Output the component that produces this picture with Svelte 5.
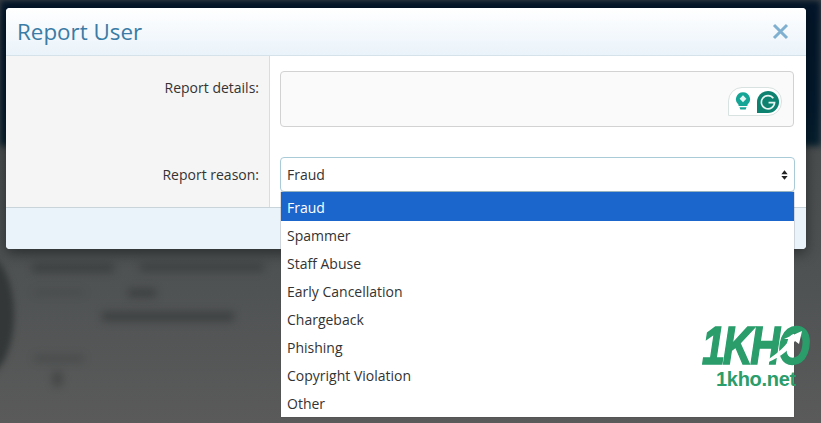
<script lang="ts">
  const reasons = ['Fraud', 'Spammer', 'Staff Abuse', 'Early Cancellation', 'Chargeback', 'Phishing', 'Copyright Violation', 'Other']
  let selected = $state('Fraud')
</script>

<div class="page">
  <div class="backdrop">
    <div class="top-band"></div>
    <div class="avatar"></div>
    <div class="blur b1"></div>
    <div class="blur b2"></div>
    <div class="blur b3"></div>
    <div class="blur b4"></div>
    <div class="blur b5"></div>
    <div class="blur b6"></div>
    <div class="blur b7"></div>
  </div>

  <div class="modal">
    <header class="modal-head">
      <h2>Report User</h2>
      <button type="button" class="close" aria-label="Close">
        <svg width="17" height="17" viewBox="0 0 17 17">
          <path d="M2 2 L15 15 M15 2 L2 15" stroke="#7fb0d0" stroke-width="3" fill="none" />
        </svg>
      </button>
    </header>

    <div class="modal-body">
      <div class="row first">
        <div class="label">Report details:</div>
        <div class="field">
          <div class="textarea">
            <div class="grammarly">
              <svg width="16" height="21" viewBox="0 0 18 23">
                <path d="M9 1 a8 8 0 0 1 5 14.2 V16.5 H4 V15.2 A8 8 0 0 1 9 1 Z" fill="#15a596" />
                <path d="M5 18 H13 L12 20.5 H6 Z" fill="#15a596" />
                <path d="M9 4.6 L12.8 8.5 L9 12.4 L5.2 8.5 Z" fill="#e3f6f3" />
              </svg>
              <svg width="22" height="22" viewBox="0 0 24 24">
                <path d="M12 0 a12 12 0 1 1 0 24 H0 V12 A12 12 0 0 1 12 0 Z" fill="#0d8270" />
                <path d="M17.8 8 A7.2 7.2 0 1 0 19.2 12.6 H12.6" fill="none" stroke="#e6f5f2" stroke-width="1.8" />
              </svg>
            </div>
          </div>
        </div>
      </div>
      <div class="row second">
        <div class="label">Report reason:</div>
        <div class="field">
          <div class="select">
            <span>{selected}</span>
            <svg width="7" height="12" viewBox="0 0 8 12">
              <path d="M4 0.5 L7.6 5 H0.4 Z M0.4 7 H7.6 L4 11.5 Z" fill="#222" />
            </svg>
            <ul class="options">
              {#each reasons as reason}
                <li class:active={reason === selected}>{reason}</li>
              {/each}
            </ul>
          </div>
        </div>
      </div>
    </div>

    <footer class="modal-foot"></footer>
  </div>

  <div class="logo">
    <div class="logo-mark">1KHO</div>
    <svg class="swoosh" width="50" height="38" viewBox="0 0 50 38">
      <path d="M2 37 C16 30 28 22 36 10 L30 10 L48 2 L45 15 L41 12 C33 24 20 33 2 37 Z" fill="#ffffff" />
    </svg>
    <div class="logo-url">1kho.net</div>
  </div>
</div>

<style>
  :global(body) {
    margin: 0;
    background: #555;
  }
  .page {
    position: relative;
    width: 821px;
    height: 423px;
    overflow: hidden;
    font-family: 'Open Sans', 'Liberation Sans', sans-serif;
    color: #333;
  }
  .backdrop {
    position: absolute;
    inset: 0;
    background: linear-gradient(180deg, #45494a 0%, #4d5152 60%, #5a5a5a 100%);
  }
  .top-band {
    position: absolute;
    left: 0;
    right: 0;
    top: 0;
    height: 146px;
    background: linear-gradient(180deg, #03162a 0%, #03192d 70%, #06202f 100%);
    filter: blur(3px);
  }
  .avatar {
    position: absolute;
    left: -44px;
    top: 255px;
    width: 58px;
    height: 120px;
    border-radius: 50%;
    background: #333737;
    filter: blur(3px);
  }
  .blur {
    position: absolute;
    background: #2f3232;
    filter: blur(4px);
    opacity: 0.6;
  }
  .b1 { left: 32px; top: 264px; width: 82px; height: 8px; }
  .b2 { left: 140px; top: 264px; width: 124px; height: 7px; }
  .b3 { left: 34px; top: 290px; width: 50px; height: 5px; opacity: 0.25; }
  .b4 { left: 128px; top: 289px; width: 28px; height: 8px; }
  .b5 { left: 102px; top: 312px; width: 132px; height: 9px; }
  .b6 { left: 34px; top: 355px; width: 50px; height: 7px; opacity: 0.3; }
  .b7 { left: 53px; top: 372px; width: 9px; height: 14px; opacity: 0.5; }

  .modal {
    position: relative;
    margin: 8px 0 0 6px;
    width: 800px;
    height: 241px;
    box-sizing: border-box;
    display: flex;
    flex-direction: column;
    border-radius: 4px;
    background: #fff;
    box-shadow: 0 4px 14px rgba(0, 0, 0, 0.45);
  }
  .modal-head {
    flex: none;
    height: 48px;
    box-sizing: border-box;
    display: flex;
    align-items: center;
    justify-content: space-between;
    padding: 0 17px 0 11px;
    border-bottom: 1px solid #d6e2ea;
    border-radius: 4px 4px 0 0;
    background: linear-gradient(180deg, #ffffff 0%, #eaf3fa 100%);
  }
  h2 {
    margin: 0;
    font-size: 22.4px;
    font-weight: 400;
    color: #3a7ca5;
  }
  .close {
    display: flex;
    padding: 0;
    border: 0;
    background: none;
  }
  .modal-body {
    flex: none;
    height: 151px;
  }
  .row {
    display: grid;
    grid-template-columns: 264px 1fr;
  }
  .first {
    height: 101px;
  }
  .second {
    height: 50px;
  }
  .label {
    box-sizing: border-box;
    padding-right: 10px;
    text-align: right;
    font-size: 14px;
    background: #f5f5f5;
    border-right: 1px solid #dcdcdc;
  }
  .first .label {
    padding-top: 22px;
  }
  .second .label {
    padding-top: 8px;
  }
  .field {
    padding-left: 10px;
  }
  .first .field {
    padding-top: 15px;
  }
  .textarea {
    position: relative;
    width: 514px;
    height: 56px;
    box-sizing: border-box;
    border: 1px solid #d2d2d2;
    border-radius: 4px;
    background: #fafafa;
  }
  .grammarly {
    position: absolute;
    right: 11px;
    top: 15px;
    height: 29px;
    width: 54px;
    box-sizing: border-box;
    display: flex;
    align-items: center;
    gap: 6px;
    padding-left: 6px;
    border: 1px solid #d8e2e0;
    border-radius: 14px 14px 14px 0;
    background: #fff;
  }
  .select {
    position: relative;
    width: 515px;
    height: 35px;
    box-sizing: border-box;
    display: flex;
    align-items: center;
    justify-content: space-between;
    padding: 0 6px;
    border: 1px solid #a9cbd8;
    border-radius: 4px;
    font-size: 14px;
    background: #fff;
  }
  .options {
    position: absolute;
    z-index: 5;
    left: 0;
    top: 34px;
    width: 513px;
    box-sizing: border-box;
    margin: 0;
    padding: 0;
    list-style: none;
    background: #fff;
    box-shadow: 0 0 1px #444;
  }
  .options li {
    height: 28px;
    line-height: 30px;
    padding: 0 6px;
    color: #333;
  }
  .options li.active {
    height: 29px;
    line-height: 32px;
    background: #1a66cc;
    color: #fff;
  }
  .modal-foot {
    flex: 1;
    border-top: 1px solid #c9d3da;
    border-radius: 0 0 4px 4px;
    background: #eaf2fa;
  }
  .logo {
    position: absolute;
    z-index: 10;
    left: 702px;
    top: 324px;
    width: 108px;
    height: 66px;
  }
  .logo-mark {
    height: 44px;
    font-family: 'Liberation Sans', sans-serif;
    font-size: 53px;
    line-height: 44px;
    font-weight: 700;
    font-style: italic;
    letter-spacing: -3px;
    color: #2a9d6b;
    -webkit-text-stroke: 1.5px #2a9d6b;
    transform: scaleX(0.78);
    transform-origin: left center;
  }
  .swoosh {
    position: absolute;
    left: 52px;
    top: 5px;
  }
  .logo-url {
    position: absolute;
    left: 14px;
    top: 45px;
    font-family: 'Liberation Sans', sans-serif;
    font-size: 20px;
    line-height: 20px;
    font-weight: 700;
    letter-spacing: -0.3px;
    color: #2a9d6b;
  }
</style>
